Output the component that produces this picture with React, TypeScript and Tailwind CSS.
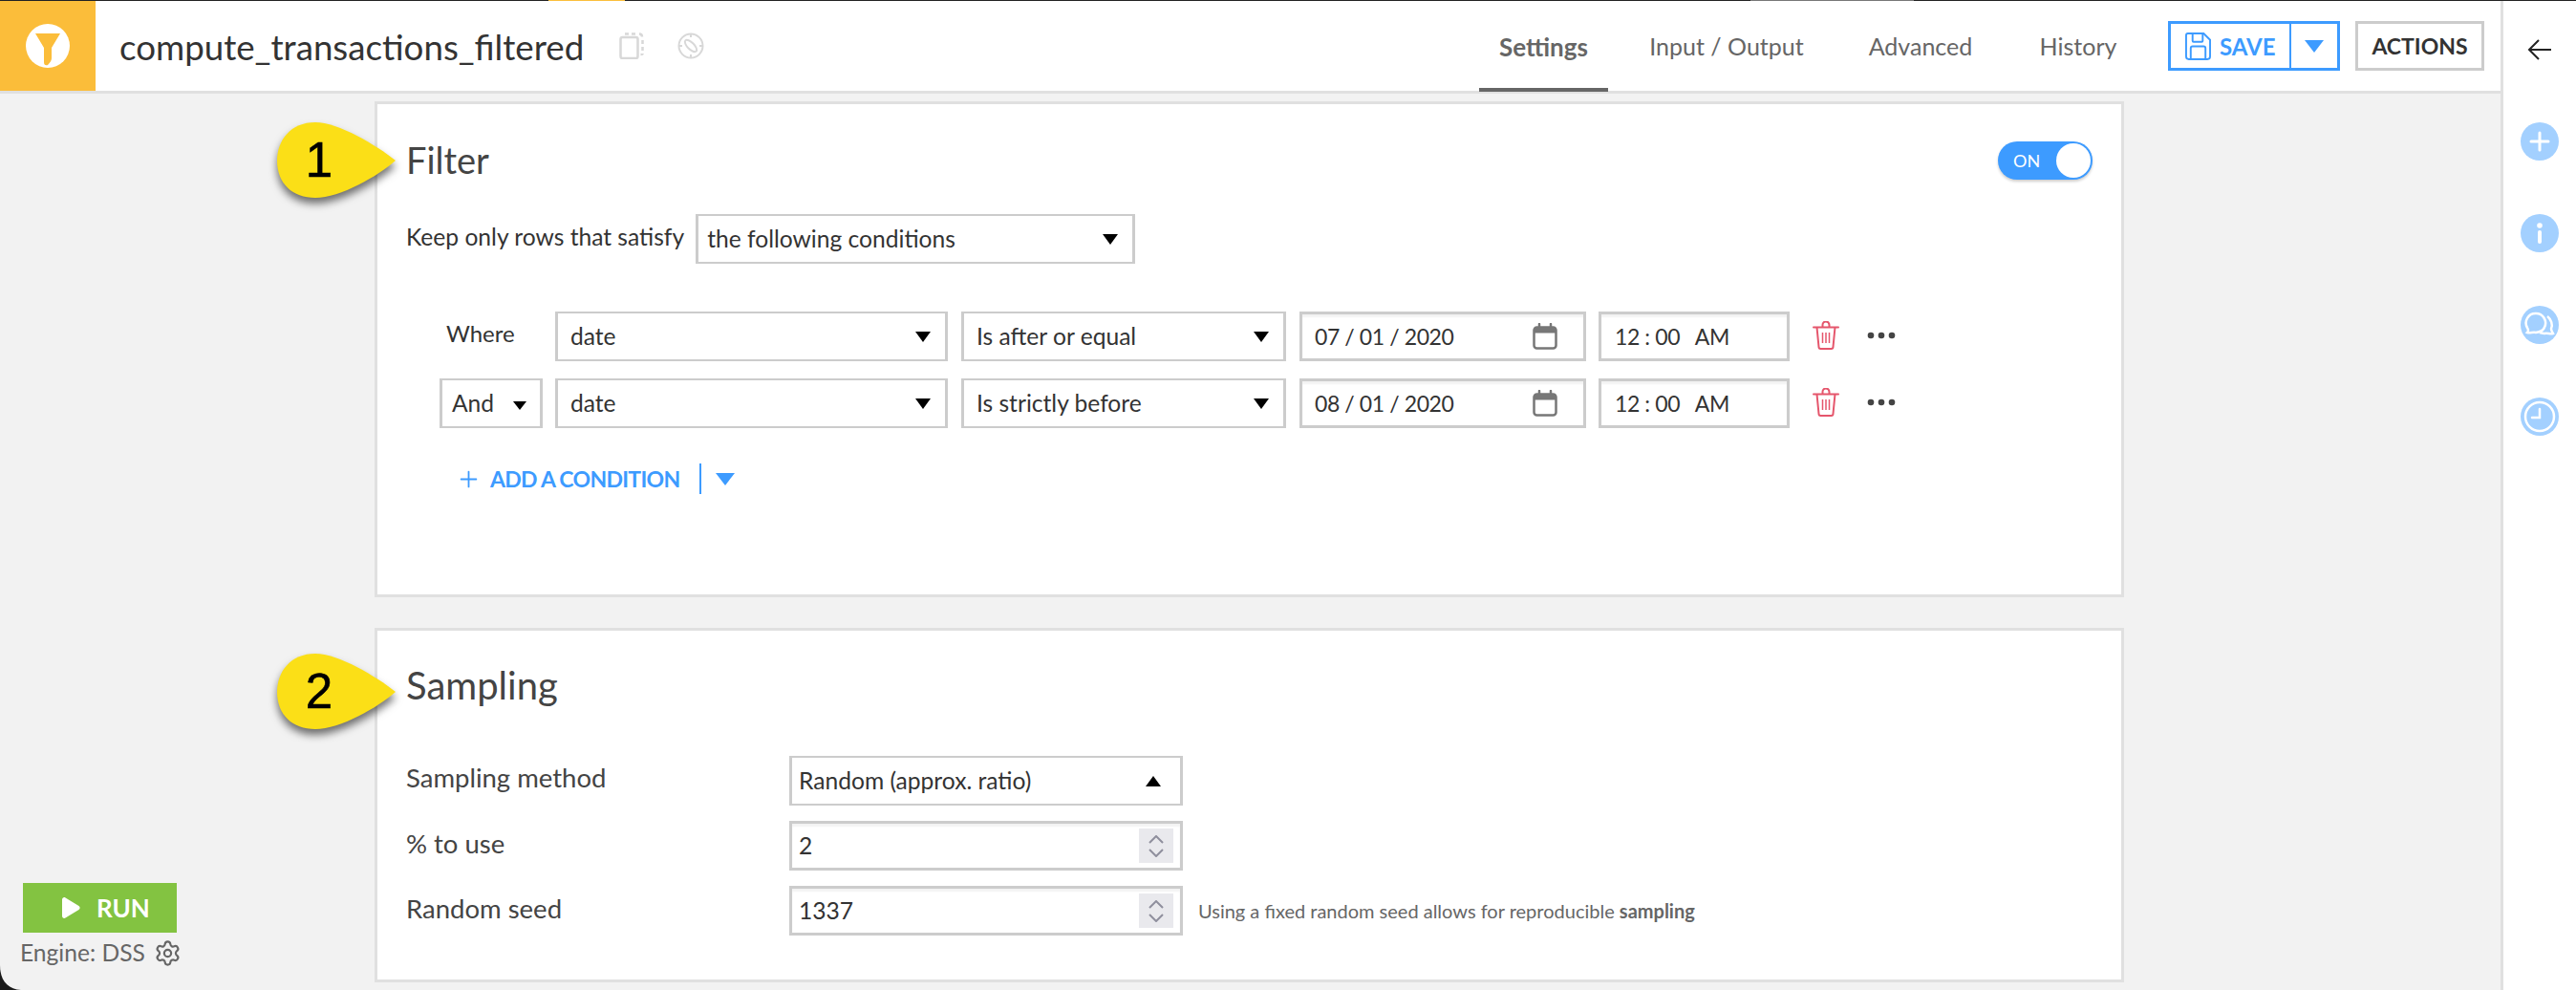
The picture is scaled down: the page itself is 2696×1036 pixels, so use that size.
import { Plus, Settings as GearIcon } from 'lucide-react';

const selectClass = 'flex items-center justify-between h-[52px] bg-white border-x-[3px] border-y-2 border-[#cccccc] text-[#333333]';
const inputClass = 'flex items-center h-[52px] bg-white border-x-[3px] border-y-[3px] border-[#cccccc] text-[#333333] shadow-[inset_0_3px_2px_rgba(0,0,0,0.05)]';

function Select({ label, width, px = 'pl-[13px] pr-[15px]', up = false, small = false }: { label: string; width: string; px?: string; up?: boolean; small?: boolean }) {
  return (
    <div className={`${selectClass} ${width} ${px}`}>
      <span>{label}</span>
      {up ? (
        <span className="w-0 h-0 border-x-[8px] border-x-transparent border-b-[11px] border-b-black" />
      ) : small ? (
        <span className="w-0 h-0 mt-[4px] border-x-[7px] border-x-transparent border-t-[9px] border-t-black" />
      ) : (
        <span className="w-0 h-0 border-x-[8px] border-x-transparent border-t-[11px] border-t-black" />
      )}
    </div>
  );
}

function Callout({ n, top }: { n: string; top: string }) {
  return (
    <div className={`absolute left-[284px] w-[140px] h-[100px] ${top}`}>
      <svg viewBox="0 0 140 100" className="w-[140px] h-[100px] drop-shadow-[0_6px_4px_rgba(0,0,0,0.55)]">
        <path d="M130 46 C110 30 70 6 46 6 C20 6 6 25 6 46 C6 70 22 85 46 85 C72 85 112 62 130 46 Z" fill="#fbdf17" />
      </svg>
      <span className="absolute left-[27px] top-[16px] w-[46px] text-center font-['Liberation_Sans',sans-serif] font-normal text-[51px] leading-[60px] text-black [-webkit-text-stroke:0.6px_black]">{n}</span>
    </div>
  );
}

function CalendarIcon() {
  return (
    <svg viewBox="0 0 26 28" className="w-[26px] h-[28px]">
      <path d="M7 1v6M19 1v6" stroke="#777" strokeWidth="2.500" strokeLinecap="round" />
      <rect x="1.500" y="4.500" width="23" height="22" rx="3" fill="#fff" stroke="#777" strokeWidth="2.500" />
      <path d="M1.500 7.500a3 3 0 0 1 3-3h17a3 3 0 0 1 3 3v3h-23z" fill="#777" />
    </svg>
  );
}

function TrashIcon() {
  return (
    <svg viewBox="0 0 28 30" fill="none" stroke="#e5566c" strokeWidth="2" className="w-[28px] h-[30px]">
      <path d="M1 6.500h26" strokeLinecap="round" />
      <path d="M10.500 6V4a3.500 3.500 0 0 1 7 0v2" />
      <path d="M4.500 6.500l2 20.500a2 2 0 0 0 2 2h11a2 2 0 0 0 2-2l2-20.500" />
      <path d="M10.500 12v11M14 12v11M17.500 12v11" strokeWidth="1.500" />
    </svg>
  );
}

function Dots() {
  return (
    <svg viewBox="0 0 30 8" className="w-[30px] h-[8px]" fill="#444">
      <circle cx="4" cy="4" r="3.300" />
      <circle cx="15" cy="4" r="3.300" />
      <circle cx="26" cy="4" r="3.300" />
    </svg>
  );
}

function ConditionRow({ first, op, date }: { first: boolean; op: string; date: string }) {
  return (
    <div className="flex items-center ml-[35px]">
      {first ? (
        <div className="w-[108px] pl-[7px] pb-[6px] text-[24px] text-[#333333]">Where</div>
      ) : (
        <Select label="And" width="w-[108px]" px="pl-[10px] pr-[14px]" small />
      )}
      <Select label="date" width="w-[411px] ml-[13px]" />
      <Select label={op} width="w-[340px] ml-[14px]" />
      <div className={`${inputClass} w-[300px] ml-[14px] pl-[13px] pr-[27px] justify-between text-[23px] tracking-[-0.4px]`}>
        <span>{date}</span>
        <CalendarIcon />
      </div>
      <div className={`${inputClass} w-[200px] ml-[13px] pl-[14px] text-[23px] tracking-[-0.4px]`}>
        <span className="whitespace-pre">12 : 00   AM</span>
      </div>
      <div className="ml-[24px] pb-[2px]"><TrashIcon /></div>
      <div className="ml-[29px] pb-[2px]"><Dots /></div>
    </div>
  );
}

function NumberField({ value }: { value: string }) {
  return (
    <div className={`${inputClass} w-[412px] pl-[7px] pr-[7px] justify-between`}>
      <span>{value}</span>
      <div className="w-[36px] h-[36px] bg-[#e9e9ed] flex flex-col items-center justify-center gap-[5px]">
        <svg viewBox="0 0 16 9" className="w-[16px] h-[9px]" fill="none" stroke="#8f8f9d" strokeWidth="2"><path d="M1 8l7-7 7 7" /></svg>
        <svg viewBox="0 0 16 9" className="w-[16px] h-[9px]" fill="none" stroke="#8f8f9d" strokeWidth="2"><path d="M1 1l7 7 7-7" /></svg>
      </div>
    </div>
  );
}

function RailCircle({ children }: { children: React.ReactNode }) {
  return <div className="w-[40px] h-[40px] rounded-full bg-[#a3d0ff] flex items-center justify-center">{children}</div>;
}

export default function App() {
  return (
    <div className="relative w-full h-[1036px] overflow-hidden flex flex-col bg-[#f2f2f2] font-['Lato',sans-serif] text-[24.600px]">
      {/* window top edge */}
      <div className="flex h-[1px] bg-[#222222]">
        <div className="w-[574px]" />
        <div className="w-[80px] bg-[#fbbf3c]" />
        <div className="w-[1178px]" />
        <div className="w-[171px] bg-[#777777]" />
      </div>

      <div className="flex flex-1 min-h-0">
        <div className="flex-1 flex flex-col min-w-0">
          {/* Header */}
          <header className="flex items-center h-[97px] bg-white border-b-[3px] border-[#e0e0e0]">
            <div className="w-[100px] h-[94px] bg-[#fbbd3a] flex items-center justify-center">
              <svg viewBox="0 0 46 46" className="w-[46px] h-[46px]">
                <circle cx="23" cy="23" r="23" fill="#fff" />
                <path d="M10 10h26l-9 15v11q0 3-4 7-4 1-4-3V25z" fill="#fbbd3a" />
              </svg>
            </div>
            <h1 className="ml-[25px] pt-[2px] text-[#333333] text-[36.700px] font-normal leading-none">compute_transactions_filtered</h1>
            <svg viewBox="0 0 26 28" fill="none" stroke="#d8d8d8" strokeWidth="2.500" className="ml-[37px] w-[26px] h-[28px]">
              <rect x="1.500" y="5" width="18" height="22" rx="2" />
              <path d="M6 1.500h4M13 1.500h4M21 1.500q3 0 3 3M24.500 8v4M24.500 15v4M24.500 22q0 1-2 1" />
            </svg>
            <svg viewBox="0 0 28 28" fill="none" stroke="#d8d8d8" strokeWidth="2" className="ml-[35px] w-[28px] h-[28px]">
              <circle cx="14" cy="14" r="12.500" />
              <ellipse cx="14" cy="14" rx="8" ry="3.500" transform="rotate(45 14 14)" />
              <path d="M14 2v3M14 23v3M2 14h3M23 14h3" />
            </svg>
            <nav className="ml-auto flex h-full items-stretch text-[25px] text-[#666666]">
              <div className="relative w-[135px] flex items-center justify-center pt-[2px] font-bold text-[26px]">
                Settings
                <span className="absolute left-0 right-0 bottom-[-1px] h-[4px] bg-[#666666]" />
              </div>
              <div className="w-[248px] flex items-center justify-center pt-[2px]">Input / Output</div>
              <div className="w-[158px] flex items-center justify-center pt-[2px]">Advanced</div>
              <div className="w-[172px] flex items-center justify-center pt-[2px]">History</div>
            </nav>
            <div className="ml-[8px] flex h-[52px] w-[180px] border-[3px] border-[#3d9bff] text-[#3d9bff]">
              <div className="flex items-center w-[126px] pl-[15px] gap-[9px] pt-[1px] font-bold text-[24px] border-r-2 border-[#3d9bff]">
                <svg viewBox="0 0 28 30" fill="none" stroke="#3d9bff" strokeWidth="2" className="w-[27px] h-[29px] shrink-0">
                  <path d="M3 1h17l7 7v18a3 3 0 0 1-3 3H4a3 3 0 0 1-3-3V3a2 2 0 0 1 2-2z" />
                  <path d="M8 1v8a1 1 0 0 0 1 1h9a1 1 0 0 0 1-1V1M6 29V17a2 2 0 0 1 2-2h12a2 2 0 0 1 2 2v12" />
                </svg>
                SAVE
              </div>
              <div className="flex-1 flex items-center justify-center">
                <span className="w-0 h-0 border-x-[10px] border-x-transparent border-t-[13px] border-t-[#3d9bff]" />
              </div>
            </div>
            <div className="ml-[16px] mr-[17px] w-[135px] h-[52px] border-[3px] border-[#cccccc] flex items-center justify-center pt-[1px] font-bold text-[23px] text-[#333333]">ACTIONS</div>
          </header>

          {/* Body */}
          <div className="flex flex-1 min-h-0">
            <aside className="w-[392px] flex flex-col pl-[24px] pb-[23px] justify-end">
              <div className="w-[161px] h-[52px] pl-[39px] bg-[#83c341] flex items-center gap-[16px] text-[26px] text-white font-bold">
                <svg viewBox="0 0 22 24" className="w-[22px] h-[24px]" fill="#fff">
                  <path d="M2 3.500c0-2 2-3 3.500-2l14 8.500c1.500 1 1.500 3 0 4l-14 8.500c-1.500 1-3.500 0-3.500-2z" />
                </svg>
                RUN
              </div>
              <div className="flex items-center gap-[9px] mt-[5px] -ml-[3px] h-[32px] text-[#666666]">
                Engine: DSS
                <GearIcon size={29} strokeWidth={1.8} color="#666666" />
              </div>
            </aside>

            <main className="w-[1831px] pt-[8px] flex flex-col gap-[32px]">
              <section className="h-[519px] bg-white border-[3px] border-[#e0e0e0] pl-[30px] pr-[30px] pt-[28px]">
                <div className="flex items-center justify-between h-[60px]">
                  <h2 className="text-[38px] font-normal text-[#444444]">Filter</h2>
                  <div className="relative w-[99px] h-[40px] mt-[2px] rounded-full bg-[#3d9bff] shadow-[0_2px_3px_rgba(0,0,0,0.2)] flex items-center">
                    <span className="ml-[16px] text-white text-[18px]">ON</span>
                    <span className="absolute right-[2px] top-[2px] w-[36px] h-[36px] rounded-full bg-white" />
                  </div>
                </div>
                <div className="flex items-center mt-[27px] text-[#333333]">
                  <span className="pb-[4px] mr-[12px]">Keep only rows that satisfy</span>
                  <Select label="the following conditions" width="w-[460px]" px="pl-[9px] pr-[15px]" />
                </div>
                <div className="mt-[50px] flex flex-col gap-[18px]">
                  <ConditionRow first op="Is after or equal" date="07 / 01 / 2020" />
                  <ConditionRow first={false} op="Is strictly before" date="08 / 01 / 2020" />
                </div>
                <div className="flex items-center h-[32px] mt-[37px] ml-[52px] text-[23px] tracking-[-0.7px] text-[#3d9bff] font-bold">
                  <Plus size={27} strokeWidth={1.6} color="#3d9bff" />
                  <span className="ml-[9px]">ADD A CONDITION</span>
                  <span className="ml-[21px] w-[2px] h-[32px] bg-[#3d9bff]" />
                  <span className="ml-[15px] w-0 h-0 border-x-[10px] border-x-transparent border-t-[13px] border-t-[#3d9bff]" />
                </div>
              </section>

              <section className="h-[371px] bg-white border-[3px] border-[#e0e0e0] pl-[30px] pt-[27px] text-[#444444]">
                <h2 className="flex items-center h-[60px] text-[40px] font-normal">Sampling</h2>
                <div className="mt-[44px] flex flex-col gap-[16px]">
                  <div className="flex items-center">
                    <span className="w-[401px] pb-[6px] text-[27.500px]">Sampling method</span>
                    <Select label="Random (approx. ratio)" width="w-[412px]" px="pl-[7px] pr-[20px]" up />
                  </div>
                  <div className="flex items-center">
                    <span className="w-[401px] pb-[4px] text-[27.500px]">% to use</span>
                    <NumberField value="2" />
                  </div>
                  <div className="flex items-center">
                    <span className="w-[401px] pb-[4px] text-[27.500px]">Random seed</span>
                    <NumberField value="1337" />
                    <span className="ml-[16px] text-[20px] text-[#666666]">Using a fixed random seed allows for reproducible <b>sampling</b></span>
                  </div>
                </div>
              </section>
            </main>
          </div>
        </div>

        {/* Right rail */}
        <aside className="w-[79px] bg-white border-l-[3px] border-[#e0e0e0] flex flex-col items-center pt-[39px] gap-[56px]">
          <svg viewBox="0 0 26 24" fill="none" stroke="#222222" strokeWidth="2" className="w-[26px] h-[24px] mb-[8px]">
            <path d="M25 12H2M12 2L2 12l10 10" />
          </svg>
          <RailCircle>
            <svg viewBox="0 0 22 22" className="w-[22px] h-[22px]" stroke="#fff" strokeWidth="3" strokeLinecap="round"><path d="M11 2v18M2 11h18" /></svg>
          </RailCircle>
          <RailCircle>
            <svg viewBox="0 0 6 22" className="w-[6px] h-[22px]" fill="#fff"><circle cx="3" cy="3" r="2.800" /><rect x="1" y="8" width="4" height="14" rx="2" /></svg>
          </RailCircle>
          <RailCircle>
            <svg viewBox="0 0 32 28" fill="none" stroke="#fff" strokeWidth="2.500" className="w-[32px] h-[28px]">
              <path d="M12 2a10 10 0 0 1 9 14.500c-1 3-5 5-9 5.500-3-1-6 1-9 0 2-2 1-3 0-5A10 10 0 0 1 12 2z" />
              <path d="M24 5c4 3 6 9 4 13 0 2 1 3 2 5-3 1-6-1-9 0-1 0-3-.500-5-1" />
            </svg>
          </RailCircle>
          <RailCircle>
            <svg viewBox="0 0 34 34" fill="none" stroke="#fff" strokeWidth="2.500" className="w-[34px] h-[34px]">
              <circle cx="17" cy="17" r="15" />
              <path d="M17 9v9H9" strokeLinecap="round" />
            </svg>
          </RailCircle>
        </aside>
      </div>

      <Callout n="1" top="top-[122px]" />
      <Callout n="2" top="top-[678px]" />

      {/* rounded window corner */}
      <svg viewBox="0 0 22 26" className="absolute left-0 bottom-0 w-[22px] h-[26px]">
        <path d="M0 0C0 16 8 25 22 26H0z" fill="#1a1a1a" />
      </svg>
    </div>
  );
}
